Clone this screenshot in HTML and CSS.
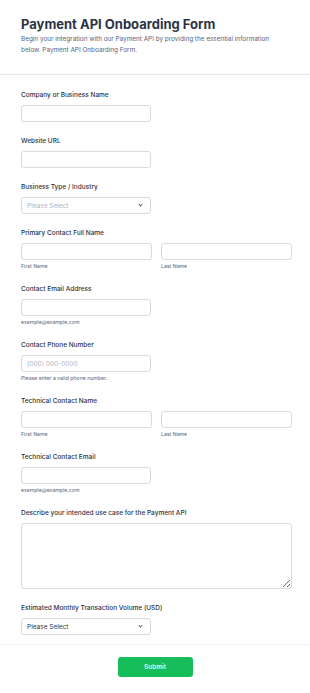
FILE: index.html
```html
<!DOCTYPE html>
<html lang="en">
<head>
    <meta charset="UTF-8">
    <meta name="viewport" content="width=device-width, initial-scale=1.0">
    <title>Payment API Onboarding Form</title>
    <link rel="stylesheet" href="styles.css">
</head>
<body>
    <div class="header">
        <h1>Payment API Onboarding Form</h1>
        <p>Begin your integration with our Payment API by providing the essential information below. Payment API Onboarding Form.</p>
    </div>
    <form class="form">
        <div class="field">
            <label>Company or Business Name</label>
            <input type="text" class="short">
        </div>
        <div class="field">
            <label>Website URL</label>
            <input type="text" class="short">
        </div>
        <div class="field">
            <label>Business Type / Industry</label>
            <div class="select short muted">Please Select <span class="caret"></span></div>
        </div>
        <div class="field">
            <label>Primary Contact Full Name</label>
            <div class="pair">
                <div><input type="text"><span class="sub">First Name</span></div>
                <div><input type="text"><span class="sub">Last Name</span></div>
            </div>
        </div>
        <div class="field">
            <label>Contact Email Address</label>
            <input type="text" class="short">
            <span class="sub">example@example.com</span>
        </div>
        <div class="field">
            <label>Contact Phone Number</label>
            <input type="text" class="short" placeholder="(000) 000-0000">
            <span class="sub">Please enter a valid phone number.</span>
        </div>
        <div class="field">
            <label>Technical Contact Name</label>
            <div class="pair">
                <div><input type="text"><span class="sub">First Name</span></div>
                <div><input type="text"><span class="sub">Last Name</span></div>
            </div>
        </div>
        <div class="field">
            <label>Technical Contact Email</label>
            <input type="text" class="short">
            <span class="sub">example@example.com</span>
        </div>
        <div class="field">
            <label>Describe your intended use case for the Payment API</label>
            <textarea></textarea>
        </div>
        <div class="field last">
            <label>Estimated Monthly Transaction Volume (USD)</label>
            <div class="select short">Please Select <span class="caret"></span></div>
        </div>
    </form>
    <div class="footer">
        <button type="button">Submit</button>
    </div>
</body>
</html>
```

FILE: styles.css
```css
body{
    margin: 0;
    background-color: white;
    font-family: Inter, "Noto Sans", sans-serif;
    color: #2c3345;
}

.header{
    padding: 16px 21px 18px;
    border-bottom: 1px solid #e6e7ec;
}

.header h1{
    margin: 0;
    font-size: 13px;
    line-height: 16px;
    font-weight: 700;
}

.header p{
    margin: 2px 0 0;
    font-size: 6.4px;
    line-height: 11px;
    color: #57647e;
    width: 268px;
}

.form{
    padding: 15px 18px 9px 21px;
    border-bottom: 1px solid #f1f2f5;
}

.field{
    margin-bottom: 14px;
}

.field.last{
    margin-bottom: 0;
}

.field label{
    display: block;
    font-size: 6.5px;
    line-height: 10px;
    font-weight: 500;
    margin-bottom: 5px;
}

input[type=text], .select{
    display: block;
    box-sizing: border-box;
    width: 100%;
    height: 17px;
    margin: 0;
    padding: 0 5px;
    border: 1px solid #d8dae3;
    border-radius: 3px;
    font-family: inherit;
    font-size: 6.5px;
    color: #2c3345;
    background: white;
}

input::placeholder{
    color: #b0b5c2;
}

.short{
    width: 130px !important;
}

.select{
    display: flex;
    align-items: center;
    justify-content: space-between;
}

.select.muted{
    color: #b0b5c2;
}

.caret{
    width: 2px;
    height: 2px;
    border-right: 1px solid #57647e;
    border-bottom: 1px solid #57647e;
    transform: rotate(45deg);
    margin: -2px 3px 0 0;
}

.pair{
    display: grid;
    grid-template-columns: 1fr 1fr;
    gap: 9px;
}

.sub{
    display: block;
    font-size: 5.2px;
    line-height: 8px;
    margin-top: 2px;
    color: #57647e;
}

textarea{
    display: block;
    box-sizing: border-box;
    width: 100%;
    height: 66px;
    margin: 0;
    border: 1px solid #d8dae3;
    border-radius: 3px;
    font-family: inherit;
}

.footer{
    display: flex;
    justify-content: center;
    padding: 12px 0;
}

.footer button{
    width: 75px;
    height: 20px;
    border: none;
    border-radius: 3px;
    background-color: #18bd5b;
    color: white;
    font-family: inherit;
    font-size: 6.5px;
    font-weight: 500;
}
```
